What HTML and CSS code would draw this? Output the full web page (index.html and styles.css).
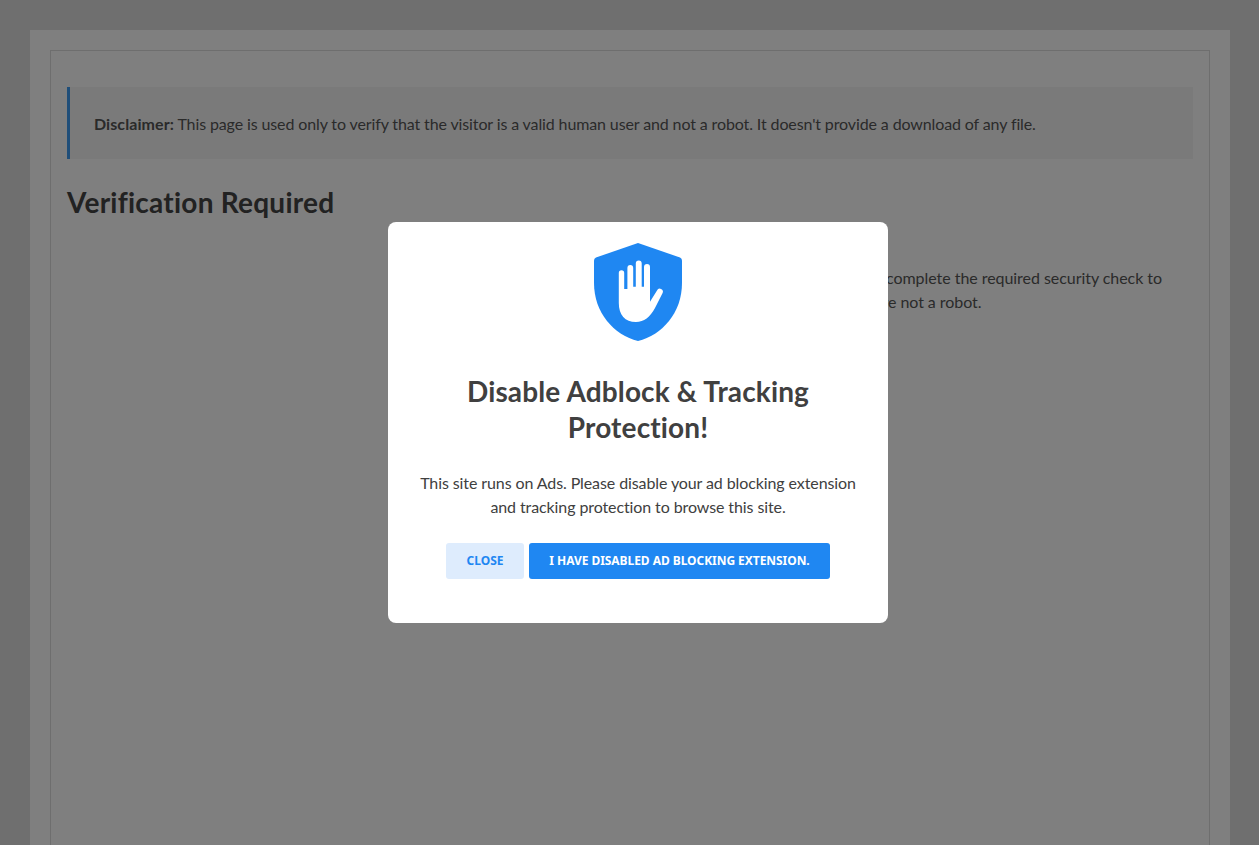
FILE: index.html
```html
<!DOCTYPE html>
<html lang="en">
<head>
    <meta charset="UTF-8">
    <meta name="viewport" content="width=device-width, initial-scale=1.0">
    <title>Verification Required</title>
    <link rel="stylesheet" href="styles.css">
</head>
<body>
    <div class="page-card">
        <div class="page-inner">
            <div class="disclaimer"><strong>Disclaimer:</strong> This page is used only to verify that the visitor is a valid human user and not a robot. It doesn't provide a download of any file.</div>
            <h1 class="page-title">Verification Required</h1>
            <div class="verify-row">
                <p class="verify-text">Users must complete the required security check to<br>show you are not a robot.</p>
            </div>
        </div>
    </div>

    <div class="overlay">
        <div class="modal">
            <svg class="modal-icon" width="88" height="98" viewBox="0 0 88 98">
                <path fill="#1f87f2" d="M44 0 L86 14.5 Q88 15.3 88 17.5 V40 C88 70 68 92 44 98 C20 92 0 70 0 40 V17.5 Q0 15.3 2 14.5 Z"/>
                <path fill="#fff" d="M24.8 30 a2.7 2.7 0 0 1 5.4 0 V46 H33.4 V25 a2.9 2.9 0 0 1 5.8 0 V43.7 H41.8 V20.5 a2.95 2.95 0 0 1 5.9 0 V43.7 H50 V24 a3 3 0 0 1 6 0 V58.7 L63 47.5 a3 3 0 0 1 5.6 2.5 L61 65 C56 74 50 79 42 79 C31 79 24.8 72 24.8 60 Z"/>
            </svg>
            <h2 class="modal-title">Disable Adblock &amp; Tracking Protection!</h2>
            <p class="modal-text">This site runs on Ads. Please disable your ad blocking extension and tracking protection to browse this site.</p>
            <div class="modal-buttons">
                <button type="button" class="modal-button close-button">Close</button>
                <button type="button" class="modal-button confirm-button">I have disabled ad blocking extension.</button>
            </div>
        </div>
    </div>
</body>
</html>
```

FILE: styles.css
```css
html, body {
    height: 100%;
}
body {
    font-family: Lato, Arial, sans-serif;
    font-size: 16px;
    line-height: 24px;
    letter-spacing: -0.12px;
    margin: 0;
    padding: 30px 29px 0 30px;
    box-sizing: border-box;
    background-color: #dedede;
    color: #555;
    overflow: hidden;
}
.page-card {
    background-color: #fff;
    padding: 20px 20px 0;
    height: 100%;
    box-sizing: border-box;
}
.page-inner {
    border: 1px solid #ddd;
    border-bottom: none;
    padding: 36px 16px 0;
    height: 100%;
    box-sizing: border-box;
}
.disclaimer {
    background-color: #f5f5f5;
    border-left: 3px solid #3e9cf2;
    padding: 25px 24px 23px;
    height: 72px;
    box-sizing: border-box;
}
.disclaimer strong {
    letter-spacing: 0.08px;
}
.page-title {
    font-size: 28px;
    line-height: 36px;
    font-weight: 700;
    letter-spacing: 0.24px;
    color: #444;
    margin: 25px 0 0;
}
.verify-row {
    display: flex;
    justify-content: flex-end;
    margin-top: 46px;
}
.verify-text {
    margin: 0 31px 0 0;
    white-space: nowrap;
    letter-spacing: -0.05px;
}
.overlay {
    position: fixed;
    inset: 0;
    background-color: rgba(0, 0, 0, 0.5);
}
.modal {
    position: absolute;
    left: 388px;
    top: 222px;
    width: 500px;
    height: 401px;
    box-sizing: border-box;
    padding: 21px 20px 0;
    background-color: #fff;
    border-radius: 8px;
    text-align: center;
}
.modal-icon {
    display: block;
    margin: 0 auto;
}
.modal-title {
    font-size: 28px;
    line-height: 36px;
    font-weight: 700;
    letter-spacing: 0.14px;
    color: #404040;
    margin: 32px 30px 0;
}
.modal-text {
    color: #404040;
    line-height: 24.4px;
    letter-spacing: -0.1px;
    margin: 26px 0 0;
}
.modal-buttons {
    display: flex;
    justify-content: center;
    gap: 5px;
    margin-top: 23.2px;
}
.modal-button {
    font-family: "Noto Sans", Arial, sans-serif;
    font-size: 12px;
    line-height: 14px;
    font-weight: 700;
    letter-spacing: 0;
    text-transform: uppercase;
    height: 36px;
    padding: 0 20px;
    border: none;
    border-radius: 3px;
    cursor: pointer;
}
.close-button {
    background-color: #deecfd;
    color: #1f87f2;
    width: 78px;
}
.confirm-button {
    background-color: #1f87f2;
    color: #fff;
    width: 301px;
    letter-spacing: -0.05px;
}
```
